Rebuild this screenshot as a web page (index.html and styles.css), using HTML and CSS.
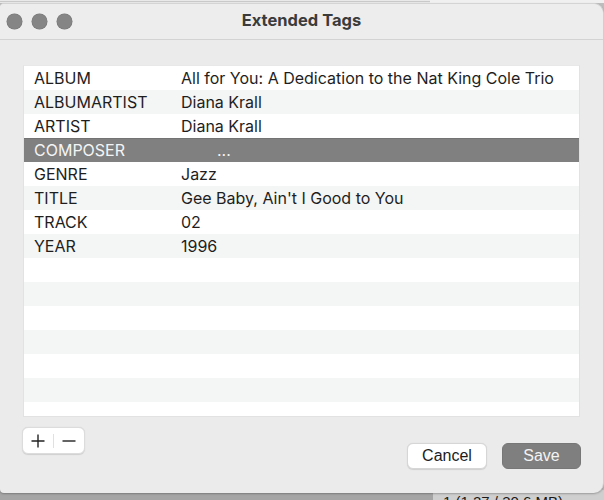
FILE: index.html
```html
<!DOCTYPE html>
<html>
<head>
<meta charset="utf-8">
<link rel="stylesheet" href="styles.css">
</head>
<body>
<div class="desk-top"><div class="desk-top-left"></div><div class="desk-top-right"></div></div>
<div class="window">
  <div class="titlebar">
    <div class="lights"><span class="light"></span><span class="light"></span><span class="light"></span></div>
    <div class="title">Extended Tags</div>
  </div>
  <div class="content">
    <div class="table">
      <div class="row"><div class="key">ALBUM</div><div class="val">All for You: A Dedication to the Nat King Cole Trio</div></div>
      <div class="row alt"><div class="key">ALBUMARTIST</div><div class="val">Diana Krall</div></div>
      <div class="row"><div class="key">ARTIST</div><div class="val">Diana Krall</div></div>
      <div class="row sel"><div class="key">COMPOSER</div><div class="val dots">...</div></div>
      <div class="row"><div class="key">GENRE</div><div class="val">Jazz</div></div>
      <div class="row alt"><div class="key">TITLE</div><div class="val">Gee Baby, Ain't I Good to You</div></div>
      <div class="row"><div class="key">TRACK</div><div class="val">02</div></div>
      <div class="row alt"><div class="key">YEAR</div><div class="val">1996</div></div>
      <div class="row"></div>
      <div class="row alt"></div>
      <div class="row"></div>
      <div class="row alt"></div>
      <div class="row"></div>
      <div class="row alt"></div>
      <div class="row last"></div>
    </div>
    <div class="footer">
      <div class="seg">
        <span class="seg-btn">
          <svg width="16" height="16" viewBox="0 0 16 16"><path d="M8 1.5v13M1.5 8h13" stroke="#222" stroke-width="1.4" fill="none"/></svg>
        </span>
        <span class="seg-div"></span>
        <span class="seg-btn">
          <svg width="16" height="16" viewBox="0 0 16 16"><path d="M1.5 8h13" stroke="#222" stroke-width="1.4" fill="none"/></svg>
        </span>
      </div>
      <div class="actions">
        <button class="btn cancel">Cancel</button>
        <button class="btn save">Save</button>
      </div>
    </div>
  </div>
</div>
<div class="desk-bottom">
  <div class="desk-bottom-left"></div>
  <div class="desk-bottom-right">1 (1.27 / 30.6 MB)</div>
</div>
</body>
</html>
```
FILE: styles.css
```css
html, body {
  margin: 0;
  padding: 0;
  width: 604px;
  height: 500px;
  overflow: hidden;
  background: #bdbdbd;
  font-family: Inter, "Liberation Sans", Arial, sans-serif;
}
.desk-top {
  display: flex;
  height: 3px;
  background: #e9e9e9;
}
.desk-top-left {
  width: 430px;
  border-top: 1px solid #c9c9c9;
  margin-top: 1px;
}
.desk-top-right {
  flex: 1;
  background: #f0f0f0;
}
.window {
  width: 604px;
  height: 490px;
  box-sizing: border-box;
  background: #ebebeb;
  border-radius: 4px 10px 10px 4px;
  border-top: 1px solid #d4d4d4;
  border-right: 1px solid #cfcfcf;
  display: flex;
  flex-direction: column;
  position: relative;
  z-index: 1;
  box-shadow: 0 1px 2px rgba(0,0,0,0.25);
}
.titlebar {
  height: 35px;
  flex: none;
  display: flex;
  align-items: center;
  position: relative;
  background: #ededed;
  border-bottom: 1px solid #d3d3d3;
  border-radius: 4px 10px 0 0;
}
.lights {
  display: flex;
  gap: 10px;
  padding-left: 7px;
  margin-top: -1px;
}
.light {
  width: 15px;
  height: 15px;
  border-radius: 50%;
  background: #858585;
  box-shadow: 0 0 0 0.5px #767676;
}
.title {
  position: absolute;
  left: 0;
  right: 0;
  text-align: center;
  font-weight: 700;
  font-size: 16.5px;
  color: #3b3b3b;
  top: 6px;
}
.content {
  flex: 1;
  display: flex;
  flex-direction: column;
  padding: 25px 23px 0 23px;
}
.table {
  height: 352px;
  box-sizing: border-box;
  background: #fff;
  border: 1px solid #e2e2e2;
  border-top: 1px solid #e8e8e8;
  overflow: hidden;
  font-size: 16px;
  color: #1e1e1e;
}
.row {
  height: 24px;
  display: flex;
  align-items: center;
  background: #fff;
}
.row.alt {
  background: #f4f5f5;
}
.row.sel {
  background: #808080;
  color: #f4f4f4;
  box-shadow: inset 0 1px 0 #737373;
}
.key {
  width: 147px;
  padding-left: 10px;
  flex: none;
}
.val {
  flex: 1;
  white-space: nowrap;
}
.val.dots {
  padding-left: 36px;
}
.footer {
  display: flex;
  justify-content: space-between;
  align-items: flex-start;
  padding-top: 10px;
}
.seg {
  display: flex;
  align-items: center;
  height: 27px;
  width: 63px;
  box-sizing: border-box;
  background: #fff;
  border-radius: 6px;
  border: 1px solid #dcdcdc;
  box-shadow: 0 0.5px 1px rgba(0,0,0,0.12);
  margin-left: -1px;
}
.seg-btn {
  flex: 1;
  display: flex;
  justify-content: center;
  align-items: center;
}
.seg-div {
  width: 1px;
  height: 14px;
  background: #e0e0e0;
}
.actions {
  display: flex;
  gap: 15px;
  margin-top: 16px;
  margin-right: -1px;
}
.btn {
  font-family: "Liberation Sans", Arial, sans-serif;
  font-size: 16px;
  height: 26px;
  border-radius: 6px;
  padding: 0;
  box-sizing: border-box;
}
.cancel {
  width: 80px;
  background: #fff;
  color: #1c1c1c;
  border: 1px solid #d6d6d6;
  box-shadow: 0 0.5px 1px rgba(0,0,0,0.12);
}
.save {
  width: 79px;
  background: #7f7f7f;
  color: #f3f3f3;
  border: 1px solid #777;
}
.desk-bottom {
  display: flex;
  height: 10px;
  margin-top: -3px;
}
.desk-bottom-left {
  width: 433px;
  background: #a5a5a5;
}
.desk-bottom-right {
  flex: 1;
  background: #cfcfcf;
  font-family: "Liberation Sans", Arial, sans-serif;
  font-size: 15px;
  color: #1a1a1a;
  padding-left: 10px;
  padding-top: 3px;
  line-height: 17px;
  white-space: nowrap;
}
```
